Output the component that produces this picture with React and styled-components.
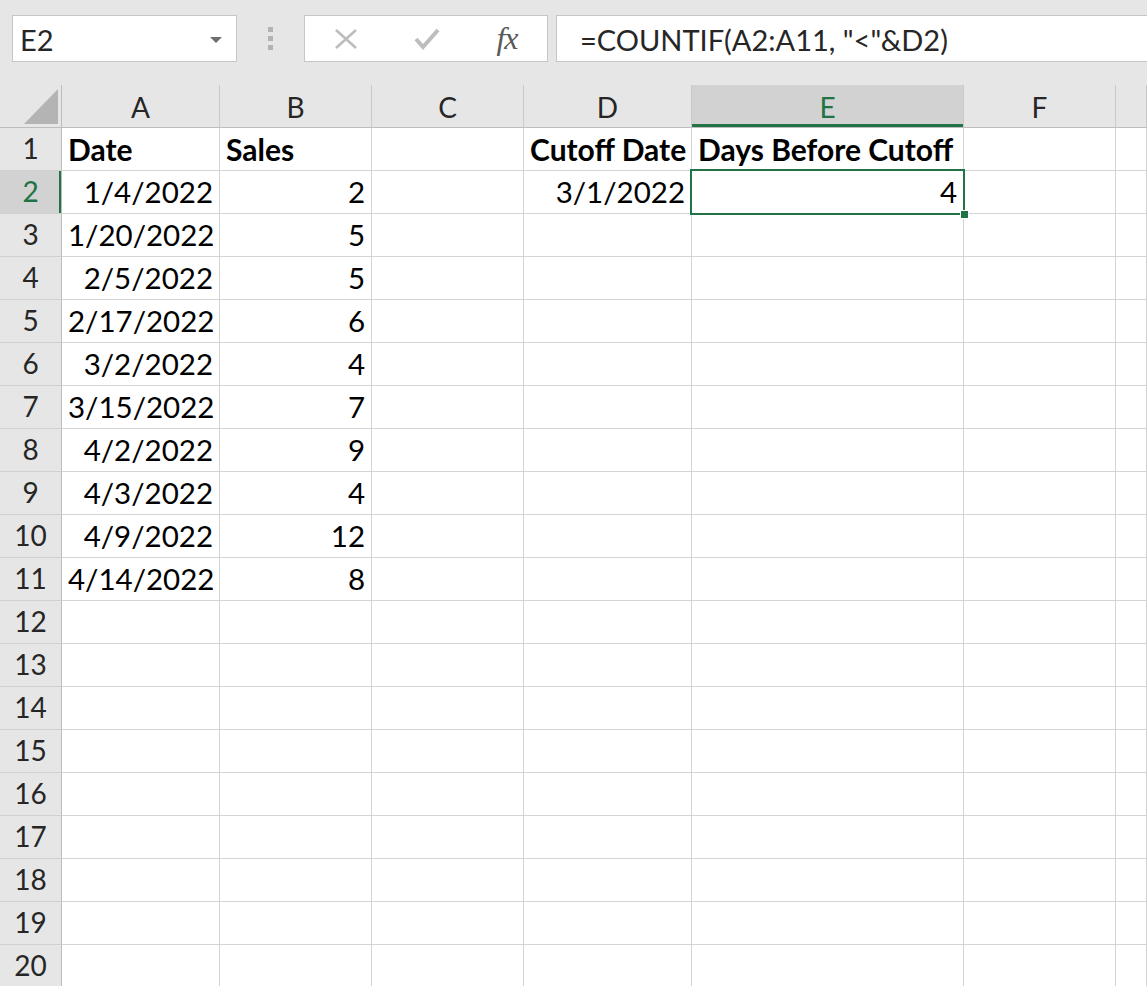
import React from "react";
import styled, { createGlobalStyle } from "styled-components";

const GlobalStyle = createGlobalStyle`
  html, body {
    margin: 0;
    padding: 0;
    background: #ffffff;
    overflow: hidden;
  }
  body {
    font-family: Lato, "Open Sans", sans-serif;
    color: #000;
  }
`;

const COLS = "62px 158px 152px 152px 168px 272px 152px 1fr";

const Page = styled.div`
  display: flex;
  flex-direction: column;
  width: 1147px;
  height: 986px;
  overflow: hidden;
`;

/* Formula bar */
const FormulaBar = styled.div`
  display: flex;
  align-items: flex-start;
  flex-shrink: 0;
  height: 85px;
  padding: 15px 0 0 12px;
  box-sizing: border-box;
  background: #e6e6e6;
`;

const NameBox = styled.div`
  display: flex;
  align-items: center;
  justify-content: space-between;
  width: 225px;
  height: 47px;
  box-sizing: border-box;
  padding: 2px 14px 0 7px;
  background: #fff;
  border: 1px solid #c6c6c6;
  font-size: 29px;
  color: #262626;
`;

const DropArrow = styled.div`
  width: 0;
  height: 0;
  border-left: 6px solid transparent;
  border-right: 6px solid transparent;
  border-top: 6px solid #6f6f6f;
`;

const Grip = styled.div`
  display: flex;
  flex-direction: column;
  gap: 4px;
  margin: 12px 31px 0 31px;

  span {
    width: 5px;
    height: 5px;
    background: #b3b3b3;
  }
`;

const ButtonBox = styled.div`
  display: flex;
  align-items: center;
  width: 244px;
  height: 47px;
  box-sizing: border-box;
  background: #fff;
  border: 1px solid #c6c6c6;
`;

const IconSlot = styled.div`
  display: flex;
  align-items: center;
  justify-content: center;
  width: ${({ $w }) => $w}px;
`;

const Fx = styled.span`
  font-family: "Liberation Serif", "DejaVu Serif", serif;
  font-style: italic;
  font-size: 32px;
  color: #595959;
  letter-spacing: -1px;
`;

const FormulaInput = styled.div`
  flex: 1;
  display: flex;
  align-items: center;
  height: 47px;
  margin-left: 8px;
  padding: 2px 0 0 23px;
  box-sizing: border-box;
  background: #fff;
  border: 1px solid #c6c6c6;
  border-right: none;
  font-size: 29px;
  color: #262626;
  white-space: pre;
`;

/* Sheet grid */
const Row = styled.div`
  display: grid;
  flex-shrink: 0;
  grid-template-columns: ${COLS};
  grid-template-rows: ${({ $h }) => $h}px;
  height: ${({ $h }) => $h}px;
`;

const Corner = styled.div`
  background: #e6e6e6;
  border-right: 1px solid #bdbdbd;
  border-bottom: 1px solid #bdbdbd;
  overflow: hidden;

  svg {
    display: block;
  }
`;

const ColHead = styled.div`
  text-align: center;
  font-size: 28px;
  line-height: 45px;
  overflow: hidden;
  color: ${({ $active }) => ($active ? "#217346" : "#262626")};
  background: ${({ $active }) => ($active ? "#d2d2d2" : "#e6e6e6")};
  border-right: 1px solid #c9c9c9;
  border-bottom: 1px solid #bdbdbd;
  box-shadow: ${({ $active }) => ($active ? "inset 0 -3px 0 #217346" : "none")};
`;

const RowHead = styled.div`
  text-align: center;
  font-size: 28px;
  line-height: 41px;
  overflow: hidden;
  color: ${({ $active }) => ($active ? "#217346" : "#262626")};
  background: ${({ $active }) => ($active ? "#d2d2d2" : "#e6e6e6")};
  border-right: 1px solid #bdbdbd;
  border-bottom: 1px solid #d0d0d0;
  box-shadow: ${({ $active }) => ($active ? "inset -2px 0 0 #217346" : "none")};
`;

const Cell = styled.div`
  position: relative;
  box-sizing: border-box;
  padding: 0 6px;
  font-size: ${({ $bold }) => ($bold ? 30 : 29.5)}px;
  line-height: 42px;
  font-weight: ${({ $bold }) => ($bold ? 700 : 400)};
  text-align: ${({ $align }) => $align || "left"};
  white-space: nowrap;
  border-right: 1px solid #d4d4d4;
  border-bottom: 1px solid #d4d4d4;
`;

const Selection = styled.div`
  position: absolute;
  z-index: 2;
  top: -2px;
  left: -2px;
  right: -2px;
  bottom: -2px;
  border: 2px solid #217346;
  pointer-events: none;
`;

const FillHandle = styled.div`
  position: absolute;
  right: -6px;
  bottom: -6px;
  width: 7px;
  height: 7px;
  background: #217346;
  border: 1px solid #fff;
`;

const data = [
  [{ v: "Date", b: true }, { v: "Sales", b: true }, null, { v: "Cutoff Date", b: true }, { v: "Days Before Cutoff", b: true }],
  [{ v: "1/4/2022", r: true }, { v: "2", r: true }, null, { v: "3/1/2022", r: true }, { v: "4", r: true, sel: true }],
  [{ v: "1/20/2022", r: true }, { v: "5", r: true }],
  [{ v: "2/5/2022", r: true }, { v: "5", r: true }],
  [{ v: "2/17/2022", r: true }, { v: "6", r: true }],
  [{ v: "3/2/2022", r: true }, { v: "4", r: true }],
  [{ v: "3/15/2022", r: true }, { v: "7", r: true }],
  [{ v: "4/2/2022", r: true }, { v: "9", r: true }],
  [{ v: "4/3/2022", r: true }, { v: "4", r: true }],
  [{ v: "4/9/2022", r: true }, { v: "12", r: true }],
  [{ v: "4/14/2022", r: true }, { v: "8", r: true }],
];

const letters = ["A", "B", "C", "D", "E", "F", ""];

export default function App() {
  const rows = Array.from({ length: 20 }, (_, i) => data[i] || []);

  return (
    <Page>
      <GlobalStyle />
      <FormulaBar>
        <NameBox>
          E2
          <DropArrow />
        </NameBox>
        <Grip>
          <span />
          <span />
          <span />
        </Grip>
        <ButtonBox>
          <IconSlot $w={82}>
            <svg width="24" height="20" viewBox="0 0 24 20">
              <path d="M2 1 L22 19 M22 1 L2 19" stroke="#bdbdbd" strokeWidth="2.6" fill="none" />
            </svg>
          </IconSlot>
          <IconSlot $w={80}>
            <svg width="26" height="22" viewBox="0 0 26 22">
              <path d="M2 11 L9 19 L24 2" stroke="#bdbdbd" strokeWidth="4" fill="none" strokeLinejoin="miter" />
            </svg>
          </IconSlot>
          <IconSlot $w={80}>
            <Fx>fx</Fx>
          </IconSlot>
        </ButtonBox>
        <FormulaInput>{'=COUNTIF(A2:A11, "<"&D2)'}</FormulaInput>
      </FormulaBar>

      <Row $h={43}>
        <Corner>
          <svg width="61" height="42" viewBox="0 0 61 42">
            <polygon points="24,39 58,39 58,4" fill="#b4b4b4" />
          </svg>
        </Corner>
        {letters.map((l, i) => (
          <ColHead key={i} $active={l === "E"}>
            {l}
          </ColHead>
        ))}
      </Row>

      {rows.map((cells, r) => (
        <Row key={r} $h={43}>
          <RowHead $active={r === 1}>{r + 1}</RowHead>
          {[0, 1, 2, 3, 4, 5, 6].map((c) => {
            const cell = cells[c];
            return (
              <Cell key={c} $bold={cell?.b} $align={cell?.r ? "right" : "left"}>
                {cell?.v}
                {cell?.sel && (
                  <Selection>
                    <FillHandle />
                  </Selection>
                )}
              </Cell>
            );
          })}
        </Row>
      ))}
    </Page>
  );
}
